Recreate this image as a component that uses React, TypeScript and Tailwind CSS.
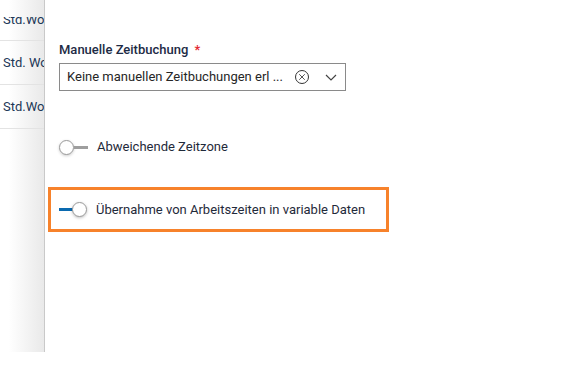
import { X } from "lucide-react";

const rows = ["Std.Wochenstunden", "Std. Wochenstunden", "Std.Wochenstunden"];

type ToggleProps = { on?: boolean };

const Toggle = ({ on }: ToggleProps) => (
  <div className="flex items-center w-[29px] h-[16px]">
    {on ? (
      <>
        <div className="w-[15px] h-[3px] bg-[#0a6ab0]" />
        <div className="-ml-[2px] w-[15px] h-[15px] rounded-full bg-white border border-[#9b9b9b] shadow-[0_1px_3px_rgba(0,0,0,0.25)]" />
      </>
    ) : (
      <>
        <div className="w-[15px] h-[15px] rounded-full bg-white border border-[#9b9b9b] shadow-[0_1px_3px_rgba(0,0,0,0.2)]" />
        <div className="w-[14px] h-[3px] bg-[#9e9e9e]" />
      </>
    )}
  </div>
);

export default function App() {
  return (
    <div
      className="w-[575px] h-[368px] bg-white overflow-hidden text-[13px] text-[#1f2a3a]"
      style={{ fontFamily: "Roboto, 'Noto Sans', sans-serif" }}
    >
      <div className="flex h-[352px]">
        {/* underlying table column, mostly hidden behind the panel */}
        <div className="w-[45px] shrink-0 flex flex-col bg-gradient-to-r from-white from-20% to-[#e9e9e9] border-r border-[#c9c9c9] overflow-hidden">
          <div className="h-[17px] shrink-0" />
          {rows.map((label, i) => (
            <div
              key={i}
              className={
                i === 0
                  ? "h-[24px] shrink-0 overflow-hidden border-b border-[#e3e3e3]"
                  : "h-[44px] shrink-0 border-b border-[#e3e3e3]"
              }
            >
              <div
                className={
                  i === 0
                    ? "-mt-[19px] h-[43px] flex items-center pl-[3px] whitespace-nowrap text-[#213756]"
                    : "h-[43px] flex items-center pl-[3px] whitespace-nowrap text-[#213756]"
                }
              >
                {label}
              </div>
            </div>
          ))}
        </div>

        {/* side panel */}
        <div className="flex-1 flex flex-col pt-[42px] pl-[14px]">
          <div className="leading-[16px] font-medium text-[#1d2b45]">
            Manuelle Zeitbuchung <span className="text-[#e3262f] ml-[3px]">*</span>
          </div>
          <div className="mt-[5px] w-[287px] h-[28px] border border-[#8a8a8a] flex items-center pl-[7px] pr-[8px]">
            <span className="flex-1 min-w-0 overflow-hidden whitespace-nowrap text-[13px] text-[#262626]">
              Keine manuellen Zeitbuchungen erl ...
            </span>
            <span className="shrink-0 ml-[8px] w-[14px] h-[14px] rounded-full border-[1.3px] border-[#333] flex items-center justify-center">
              <X size={10} strokeWidth={2} color="#333" />
            </span>
            <svg width="12" height="7" viewBox="0 0 12 7" className="shrink-0 ml-[16px]">
              <path d="M1 1 L6 6 L11 1" fill="none" stroke="#444" strokeWidth="1.2" />
            </svg>
          </div>

          <div className="mt-[46px] h-[20px] flex items-center">
            <Toggle />
            <span className="ml-[9px]">Abweichende Zeitzone</span>
          </div>

          <div className="mt-[30px] -ml-[11px] w-[341px] h-[45px] border-[3px] border-[#f7822b] flex items-center pl-[8px]">
            <Toggle on />
            <span className="ml-[8px]">Übernahme von Arbeitszeiten in variable Daten</span>
          </div>
        </div>
      </div>
    </div>
  );
}
